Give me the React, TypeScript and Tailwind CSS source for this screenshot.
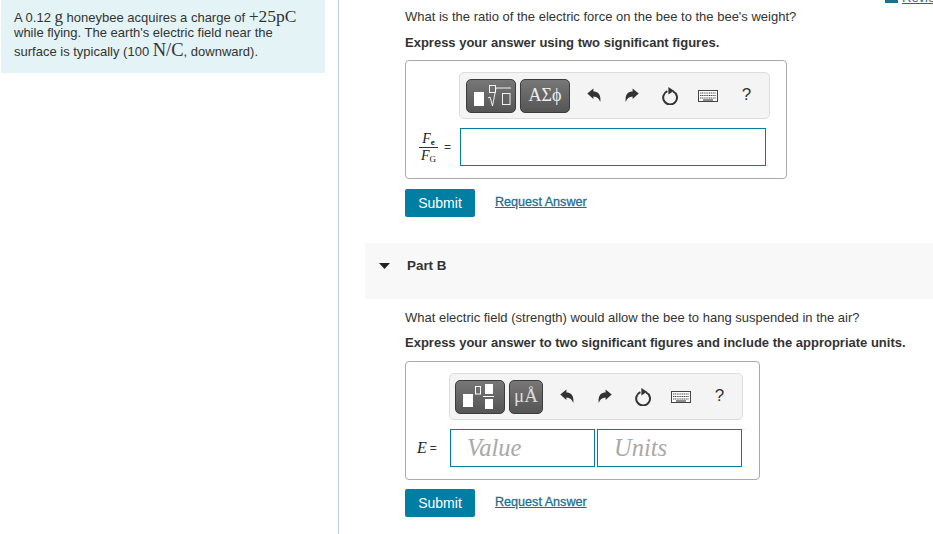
import type { ReactNode } from 'react';

const sans = "font-['Liberation_Sans',Arial,sans-serif]";
const serif = "font-['Liberation_Serif','Times_New_Roman',serif]";

function Undo() {
  return (
    <svg width="14" height="15" viewBox="0 0 14 15" className="text-[#333]">
      <path d="M0.3 5.6 L6.4 0.4 V3.4 C11 3.4 14.4 6.6 13.2 14 C12.2 10.6 10 8.4 6.4 8.4 V11 Z" fill="currentColor" />
    </svg>
  );
}

function Redo() {
  return (
    <svg width="14" height="15" viewBox="0 0 14 15" className="text-[#333]">
      <path d="M13.7 5.6 L7.6 0.4 V3.4 C3 3.4 -0.4 6.6 0.8 14 C1.8 10.6 4 8.4 7.6 8.4 V11 Z" fill="currentColor" />
    </svg>
  );
}

function Reset() {
  return (
    <svg width="17" height="18" viewBox="0 0 17 18" fill="none" className="text-[#333]">
      <path d="M11 4.3 A6.9 6.9 0 1 1 5.4 4.2" stroke="currentColor" strokeWidth="2" />
      <path d="M6.4 0 L12 3.8 L6.4 7.6 Z" fill="currentColor" />
    </svg>
  );
}

function Keyboard() {
  return (
    <svg width="20" height="12" viewBox="0 0 20 12" className="text-[#444]">
      <rect x="0.5" y="0.5" width="19" height="11" fill="#fff" stroke="currentColor" />
      <path d="M2 3h16M2 5.5h16M2 8h16" stroke="currentColor" strokeWidth="1.2" strokeDasharray="1.2 0.6" />
      <path d="M5 10h10" stroke="currentColor" strokeWidth="1.2" />
    </svg>
  );
}

function DarkButton({ width, children }: { width: string; children: ReactNode }) {
  return (
    <div
      className={`${width} h-[34px] flex items-center justify-center rounded-[5px] border border-[#3c3c3c] bg-gradient-to-b from-[#777] to-[#555] text-white`}
    >
      {children}
    </div>
  );
}

function Tools() {
  return (
    <div className="ml-[5px] flex items-center">
      <div className="w-[38px] flex justify-center"><Undo /></div>
      <div className="w-[38px] flex justify-center"><Redo /></div>
      <div className="w-[38px] flex justify-center"><Reset /></div>
      <div className="w-[38px] flex justify-center"><Keyboard /></div>
      <div className={`${sans} w-[38px] -mt-[1px] pl-[1px] text-center text-[17px] text-[#333]`}>?</div>
    </div>
  );
}

function Toolbar({ width, pad, children }: { width: string; pad: string; children: ReactNode }) {
  return (
    <div className={`${width} ${pad} h-[47px] flex items-center rounded-[5px] border border-[#ddd] bg-[#f4f4f4]`}>
      {children}
    </div>
  );
}

function Actions({ linkOffset }: { linkOffset: string }) {
  return (
    <div className="flex items-center">
      <button className="w-[70px] h-[28px] rounded-[2px] bg-[#007FA3] text-white text-[14px]">Submit</button>
      <a className={`ml-[20px] text-[12.6px] text-[#1D6F8F] underline ${linkOffset} [-webkit-text-stroke:0.3px]`}>Request Answer</a>
    </div>
  );
}

export default function App() {
  return (
    <div className={`${sans} w-[933px] h-[534px] flex overflow-hidden bg-white text-[#333]`}>
      {/* Left: problem statement */}
      <div className="w-[339px] shrink-0 border-r border-[#bcd0e2] pl-[1px]">
        <div className="w-[324px] h-[73px] bg-[#e4f4f6] pl-[13px] pt-[8px] text-[13px] leading-[16.5px] text-[#333]">
          <p className="h-[16.5px]">
            A 0.12 <span className={`${serif} text-[17px] leading-none`}>g</span> honeybee acquires a charge of{' '}
            <span className={`${serif} text-[17.5px] leading-none`}>+25pC</span>
          </p>
          <p className="h-[16.5px]">while flying. The earth's electric field near the</p>
          <p className="h-[16.5px]">
            surface is typically (100 <span className={`${serif} text-[18.5px] leading-none`}>N/C</span>, downward).
          </p>
        </div>
      </div>

      {/* Right: question parts */}
      <div className="flex-1 min-w-0">
        {/* Clipped link from the scrolled header */}
        <div className="h-[4px] overflow-hidden flex items-end pl-[546px]">
          <div className="w-[13px] h-[3px] mb-[1px] bg-[#1D6F8F] shrink-0" />
          <a className="ml-[4px] text-[13px] leading-[12px] text-[#1D6F8F] underline shrink-0">Review</a>
        </div>

        {/* Part A */}
        <div className="pl-[66px]">
          <p className="mt-[5px] text-[13px] leading-[16px]">What is the ratio of the electric force on the bee to the bee's weight?</p>
          <p className="mt-[10px] text-[13px] leading-[16px] font-bold">Express your answer using two significant figures.</p>

          <div className="mt-[9px] w-[382px] h-[119px] rounded-[4px] border border-[#aaa] pt-[11px] pl-[53px]">
            <Toolbar width="w-[311px]" pad="pl-[6px]">
              <div className="flex gap-[4px]">
                <DarkButton width="w-[50px]">
                  <svg width="40" height="24" viewBox="0 0 40 24" fill="none" stroke="#fff">
                    <rect x="3" y="8" width="10" height="14" fill="#fff" stroke="none" />
                    <rect x="18.5" y="1.5" width="6" height="7" strokeWidth="0.9" />
                    <path d="M17 14 L19 13 L21.5 22 L25 4 H40" strokeWidth="0.9" />
                    <rect x="31.5" y="9.5" width="7.5" height="11" strokeWidth="0.9" />
                  </svg>
                </DarkButton>
                <DarkButton width="w-[50px]">
                  <span className={`${serif} text-[18px] text-[#eee]`}>ΑΣϕ</span>
                </DarkButton>
              </div>
              <Tools />
            </Toolbar>

            <div className="mt-[9px] -ml-[40px] flex items-center">
              <div className={`${serif} italic text-[#222] w-[19px] flex flex-col items-center text-[14px] leading-[14px]`}>
                <span className="pb-[1px]">F<sub className="text-[9px] not-italic font-bold leading-none">e</sub></span>
                <span className="w-full text-center border-t border-[#333] pt-[1px]">F<sub className="text-[9px] not-italic leading-none">G</sub></span>
              </div>
              <span className="w-[22px] pl-[6px] text-[12px] text-[#333]">=</span>
              <div className="w-[306px] h-[38px] border border-[#007FA3] bg-white" />
            </div>
          </div>

          <div className="mt-[10px]">
            <Actions linkOffset="-mt-[2px]" />
          </div>
        </div>

        {/* Part B */}
        <div className="mt-[26px] ml-[26px] h-[56px] bg-[#f8f8f8] flex items-center pl-[14px] pb-[10px]">
          <svg width="11" height="6" viewBox="0 0 11 6">
            <path d="M0 0 H11 L5.5 6 Z" fill="#222" />
          </svg>
          <span className="ml-[17px] text-[13.4px] font-bold">Part B</span>
        </div>

        <div className="pl-[66px]">
          <p className="mt-[11px] text-[13px] leading-[16px]">What electric field (strength) would allow the bee to hang suspended in the air?</p>
          <p className="mt-[9px] text-[13px] leading-[16px] font-bold">Express your answer to two significant figures and include the appropriate units.</p>

          <div className="mt-[10px] w-[355px] h-[119px] rounded-[4px] border border-[#aaa] pt-[11px] pl-[43px]">
            <Toolbar width="w-[294px]" pad="pl-[5px]">
              <div className="flex gap-[4px]">
                <DarkButton width="w-[50px]">
                  <svg width="34" height="26" viewBox="0 0 34 26" fill="#fff">
                    <rect x="0" y="10" width="10" height="13" />
                    <rect x="12.5" y="2.5" width="5" height="7.5" fill="none" stroke="#fff" />
                    <rect x="22" y="0" width="8" height="10" />
                    <rect x="20" y="12" width="11" height="1" />
                    <rect x="22" y="15" width="8" height="10" />
                  </svg>
                </DarkButton>
                <DarkButton width="w-[34px]">
                  <span className={`${serif} text-[19px] text-[#ddd]`}>μÅ</span>
                </DarkButton>
              </div>
              <Tools />
            </Toolbar>

            <div className="mt-[9px] -ml-[32px] flex items-center">
              <span className="flex items-center w-[33px] text-[12px]">
                <span className={`${serif} italic text-[16px] text-[#222]`}>E</span>
                <span className="ml-[3px]">=</span>
              </span>
              <div className={`${serif} italic w-[145px] h-[38px] border border-[#007FA3] pl-[16px] flex items-center text-[24.5px] text-[#a9a9a9]`}>
                Value
              </div>
              <div className={`${serif} italic ml-[2px] w-[145px] h-[38px] border border-[#007FA3] pl-[16px] flex items-center text-[24.5px] text-[#a9a9a9]`}>
                Units
              </div>
            </div>
          </div>

          <div className="mt-[9px]">
            <Actions linkOffset="-mt-[1px]" />
          </div>
        </div>
      </div>
    </div>
  );
}
